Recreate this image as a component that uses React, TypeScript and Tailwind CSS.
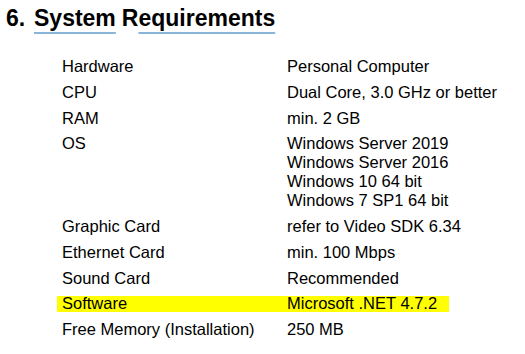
const rows: { label: string; value: string[]; mark?: boolean }[] = [
  { label: 'Hardware', value: ['Personal Computer'] },
  { label: 'CPU', value: ['Dual Core, 3.0 GHz or better'] },
  { label: 'RAM', value: ['min. 2 GB'] },
  {
    label: 'OS',
    value: ['Windows Server 2019', 'Windows Server 2016', 'Windows 10 64 bit', 'Windows 7 SP1 64 bit'],
  },
  { label: 'Graphic Card', value: ['refer to Video SDK 6.34'] },
  { label: 'Ethernet Card', value: ['min. 100 Mbps'] },
  { label: 'Sound Card', value: ['Recommended'] },
  { label: 'Software', value: ['Microsoft .NET 4.7.2'], mark: true },
  { label: 'Free Memory (Installation)', value: ['250 MB'] },
]

export default function App() {
  return (
    <div className="w-[525px] h-[354px] bg-white text-black font-['Liberation_Sans',Arial,sans-serif] overflow-hidden">
      <h2 className="flex pl-[6px] pt-[5px] text-[23px] leading-[26px] font-bold">
        <span className="w-[28px]">6.</span>
        <span className="underline decoration-[#8ab4d9] decoration-[1.5px] underline-offset-[6px]">System</span>
        <span className="ml-[6px]">R</span>
        <span className="underline decoration-[#8ab4d9] decoration-[1.5px] underline-offset-[6px]">equirements</span>
      </h2>

      <div className="flex flex-col gap-y-[6.75px] mt-[26px] text-[16.5px] leading-[19px]">
        {rows.map((r) =>
          r.mark ? (
            <div key={r.label} className="h-[19px] flex items-center">
              <div className="ml-[57px] w-[392px] h-[16px] pl-[5px] flex items-center bg-[#ffff00]">
                <span className="w-[225px]">{r.label}</span>
                <span>{r.value[0]}</span>
              </div>
            </div>
          ) : (
            <div key={r.label} className="flex pl-[62px]">
              <span className="w-[225px] shrink-0">{r.label}</span>
              <div className="flex flex-col">
                {r.value.map((v) => (
                  <span key={v}>{v}</span>
                ))}
              </div>
            </div>
          )
        )}
      </div>
    </div>
  )
}
